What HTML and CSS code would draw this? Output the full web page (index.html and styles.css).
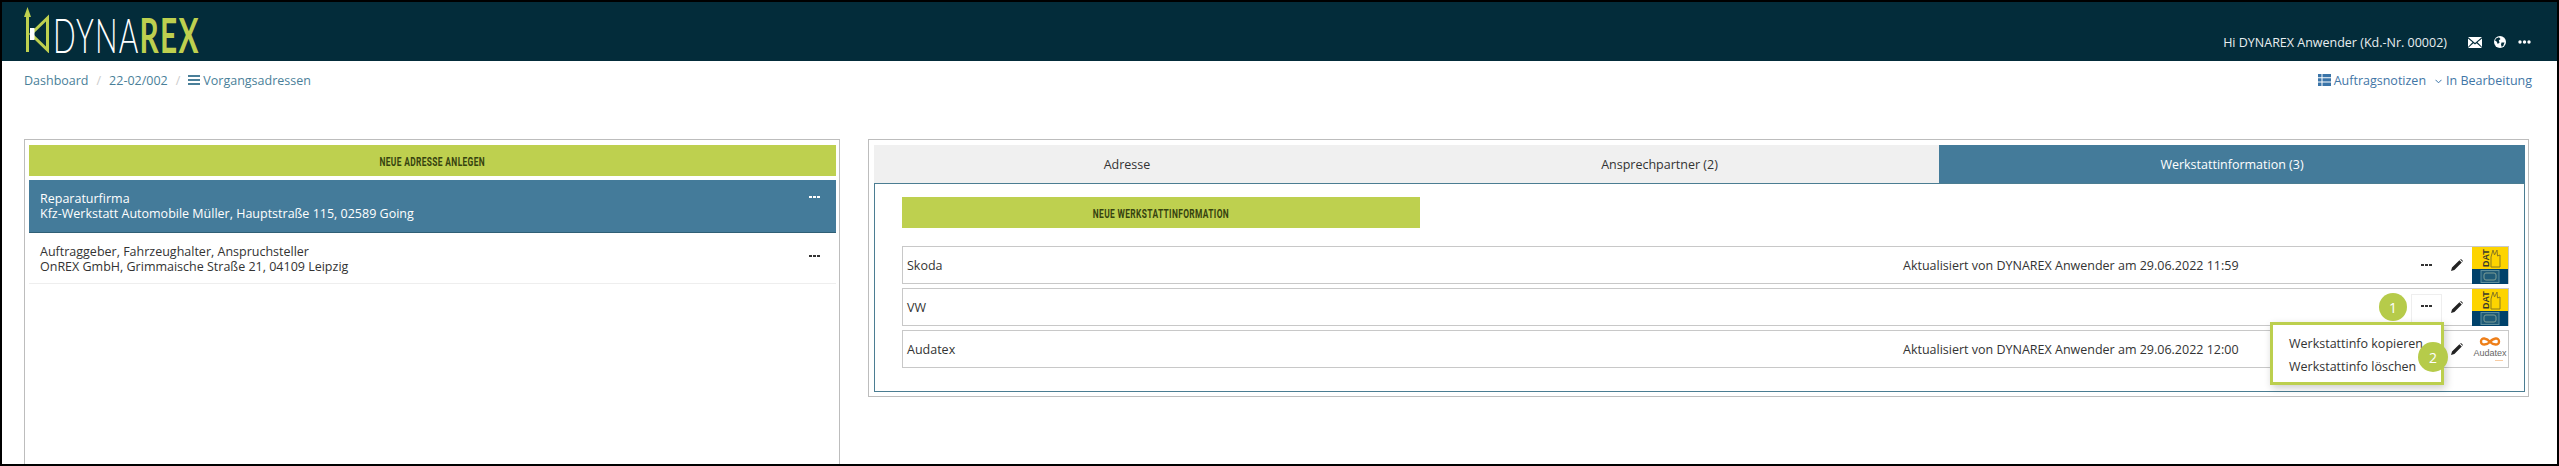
FILE: index.html
```html
<!DOCTYPE html>
<html lang="de">
<head>
<meta charset="utf-8">
<title>Vorgangsadressen</title>
<link rel="stylesheet" href="styles.css">
</head>
<body>
<div class="frame">
  <header class="topbar">
    <a class="logo">
      <svg class="logo-mark" viewBox="0 0 26 46" width="26" height="46">
        <path d="M3.5 45V8" stroke="#bed04f" stroke-width="3" fill="none"/>
        <path d="M0 10L3.5 0L7 10Z" fill="#bed04f"/>
        <path d="M23.5 11V43L7 27Z" fill="none" stroke="#bed04f" stroke-width="3"/>
        <rect x="6" y="21" width="4.5" height="12" fill="#fff"/>
      </svg>
      <span class="logo-word">DYNA<b>REX</b></span>
    </a>
    <div class="top-right">
      <span class="hi">Hi DYNAREX Anwender (Kd.-Nr. 00002)</span>
      <svg class="ic-mail" viewBox="0 0 14 11" width="14" height="11"><path d="M0 0H14L7 6Z M0 1.5V10L4.5 5.2Z M14 1.5V10L9.5 5.2Z M0 11L5.4 6.3L7 7.6L8.6 6.3L14 11Z" fill="#fff"/></svg>
      <svg class="ic-globe" viewBox="0 0 12 12" width="12" height="12"><circle cx="6" cy="6" r="6" fill="#fff"/><path d="M2 2.5L5 1.2L6.5 3L4.8 4.5L5.6 6.5L3.8 8L2.6 5.5L1 4.6Z M7.5 6.5H10.5L9.2 10L7.6 10.8L7 8.4Z" fill="#032c3a"/></svg>
      <svg class="ic-dots-top" viewBox="0 0 13 4" width="13" height="4"><circle cx="2" cy="2" r="1.7" fill="#fff"/><circle cx="6.5" cy="2" r="1.7" fill="#fff"/><circle cx="11" cy="2" r="1.7" fill="#fff"/></svg>
    </div>
  </header>

  <nav class="crumbs">
    <div class="crumb-left">
      <a>Dashboard</a><span class="sep">/</span><a>22-02/002</a><span class="sep">/</span>
      <svg class="ic-bars" viewBox="0 0 12 10" width="12" height="10"><path d="M0 0H12V2H0Z M0 4H12V6H0Z M0 8H12V10H0Z" fill="#4a7f99"/></svg><a>Vorgangsadressen</a>
    </div>
    <div class="crumb-right">
      <svg class="ic-thlist" viewBox="0 0 13 12" width="13" height="12"><path d="M0 0H3.5V3.3H0Z M4.5 0H13V3.3H4.5Z M0 4.3H3.5V7.6H0Z M4.5 4.3H13V7.6H4.5Z M0 8.6H3.5V12H0Z M4.5 8.6H13V12H4.5Z" fill="#3a74a8"/></svg>
      <a>Auftragsnotizen</a>
      <svg class="ic-chev" viewBox="0 0 7 5" width="7" height="5"><path d="M.5 .8L3.5 3.8L6.5 .8" fill="none" stroke="#3a74a8"/></svg>
      <a>In Bearbeitung</a>
    </div>
  </nav>

  <main class="content">
    <section class="panel-left">
      <button class="btn btn-wide"><span>NEUE ADRESSE ANLEGEN</span></button>
      <div class="addr addr-active">
        <p>Reparaturfirma<br>Kfz-Werkstatt Automobile Müller, Hauptstraße 115, 02589 Going</p>
        <svg class="dots" viewBox="0 0 11 2" width="11" height="2"><path d="M0 0H3V2H0Z M4 0H7V2H4Z M8 0H11V2H8Z" fill="#fff"/></svg>
      </div>
      <div class="addr">
        <p>Auftraggeber, Fahrzeughalter, Anspruchsteller<br>OnREX GmbH, Grimmaische Straße 21, 04109 Leipzig</p>
        <svg class="dots" viewBox="0 0 11 2" width="11" height="2"><path d="M0 0H3V2H0Z M4 0H7V2H4Z M8 0H11V2H8Z" fill="#333"/></svg>
      </div>
    </section>

    <section class="panel-right">
      <div class="tabs">
        <div class="tab tab-a">Adresse</div>
        <div class="tab tab-b">Ansprechpartner (2)</div>
        <div class="tab tab-c">Werkstattinformation (3)</div>
      </div>
      <div class="tab-body">
        <button class="btn btn-info"><span>NEUE WERKSTATTINFORMATION</span></button>
        <div class="rows">
          <div class="row">
            <span class="name">Skoda</span>
            <span class="updated">Aktualisiert von DYNAREX Anwender am 29.06.2022 11:59</span>
            <span class="dots-box"><svg viewBox="0 0 11 2" width="11" height="2"><path d="M0 0H3V2H0Z M4 0H7V2H4Z M8 0H11V2H8Z" fill="#333"/></svg></span>
            <span class="pencil"><svg viewBox="0 0 12 12" width="12" height="12"><path d="M0 12L1 8.6L8.4 1.2L10.8 3.6L3.4 11Z M9.2 .5L10 0L12 2L11.5 2.8Z" fill="#222"/></svg></span>
            <svg class="logo-dat" viewBox="0 0 36 37" width="36" height="37"><rect width="36" height="22" fill="#fdd400"/><rect y="22" width="36" height="15" fill="#00416a"/><text class="dat-txt" transform="translate(17 20) rotate(-90)">DAT</text><path d="M19 20V10L21 3L22.5 8L25 3L25.5 9L28 8V20Z" fill="none" stroke="#8a7a20"/><rect x="9" y="23.5" width="18" height="12" fill="#1f5a76" stroke="#5f8f9d"/><rect x="12" y="26" width="12" height="7" rx="2" fill="none" stroke="#7c9c94"/></svg>
          </div>
          <div class="row">
            <span class="name">VW</span>
            <span class="dots-box dots-open"><svg viewBox="0 0 11 2" width="11" height="2"><path d="M0 0H3V2H0Z M4 0H7V2H4Z M8 0H11V2H8Z" fill="#333"/></svg></span>
            <span class="pencil"><svg viewBox="0 0 12 12" width="12" height="12"><path d="M0 12L1 8.6L8.4 1.2L10.8 3.6L3.4 11Z M9.2 .5L10 0L12 2L11.5 2.8Z" fill="#222"/></svg></span>
            <svg class="logo-dat" viewBox="0 0 36 37" width="36" height="37"><rect width="36" height="22" fill="#fdd400"/><rect y="22" width="36" height="15" fill="#00416a"/><text class="dat-txt" transform="translate(17 20) rotate(-90)">DAT</text><path d="M19 20V10L21 3L22.5 8L25 3L25.5 9L28 8V20Z" fill="none" stroke="#8a7a20"/><rect x="9" y="23.5" width="18" height="12" fill="#1f5a76" stroke="#5f8f9d"/><rect x="12" y="26" width="12" height="7" rx="2" fill="none" stroke="#7c9c94"/></svg>
            <span class="badge badge-one">1</span>
            <div class="menu">
              <div>Werkstattinfo kopieren</div>
              <div>Werkstattinfo löschen</div>
            </div>
            <span class="badge badge-two">2</span>
          </div>
          <div class="row">
            <span class="name">Audatex</span>
            <span class="updated">Aktualisiert von DYNAREX Anwender am 29.06.2022 12:00</span>
            <span class="dots-box"></span>
            <span class="pencil"><svg viewBox="0 0 12 12" width="12" height="12"><path d="M0 12L1 8.6L8.4 1.2L10.8 3.6L3.4 11Z M9.2 .5L10 0L12 2L11.5 2.8Z" fill="#222"/></svg></span>
            <svg class="logo-audatex" viewBox="0 0 36 36" width="36" height="36"><path d="M18 11C15 7 9 6 9 10.500C9 15 15 14 18 11C21 7 27 6 27 10.500C27 15 21 14 18 11Z" fill="none" stroke="#ee7f1a" stroke-width="2.4"/><text class="aud-txt" x="18" y="25">Audatex</text><rect x="23" y="29" width="8" height="1" fill="#ee7f1a" opacity=".4"/></svg>
          </div>
        </div>
      </div>
    </section>
  </main>
</div>
</body>
</html>
```
FILE: styles.css
```css
* { box-sizing: border-box; }
html, body { margin: 0; padding: 0; background: #000; }
body { width: 2559px; height: 466px; overflow: hidden; font-family: "Open Sans", "Liberation Sans", sans-serif; font-size: 12.5px; color: #333; }
.frame { width: 2559px; height: 466px; border: 2px solid #000; background: #fff; display: flex; flex-direction: column; overflow: hidden; }

.topbar { height: 59px; flex: none; background: #032c3a; display: flex; justify-content: space-between; padding: 0 26px 0 22px; }
.logo { display: flex; align-items: flex-start; padding-top: 5px; }
.logo-mark { flex: none; margin-right: 3px; }
.logo-word { display: block; margin-top: 1px; font-family: Lato, sans-serif; font-weight: 300; font-size: 47px; line-height: 54px; color: #fff; letter-spacing: 2px; transform: scaleX(.635); transform-origin: left center; white-space: nowrap; }
.logo-word b { font-weight: 700; color: #bed04f; }
.top-right { display: flex; align-items: center; padding-top: 21px; color: #e8eef0; }
.ic-mail { margin-left: 21px; }
.ic-globe { margin-left: 12px; }
.ic-dots-top { margin-left: 12px; }

.crumbs { height: 38px; flex: none; display: flex; justify-content: space-between; align-items: center; padding: 0 25px 0 22px; color: #4a7f99; }
.crumb-left, .crumb-right { display: flex; align-items: center; }
.sep { color: #ccc; margin: 0 8px; }
.ic-bars { margin-right: 3px; }
.crumb-right { color: #3f76a6; }
.ic-thlist { margin-right: 3px; }
.ic-chev { margin: 2px 4px 0 9px; }

.content { flex: 1; display: flex; align-items: flex-start; padding: 40px 0 0 22px; gap: 28px; min-height: 0; }
.panel-left { width: 816px; height: 325px; flex: none; border: 1px solid #bdbdbd; border-bottom: 0; padding: 5px 3px 0 4px; }
.btn { display: flex; align-items: center; justify-content: center; border: 0; padding: 0; background: #bed04f; height: 31px; color: #36430f; font-family: Roboto, sans-serif; font-weight: 700; font-size: 13.5px; letter-spacing: .6px; }
.btn span { display: block; transform: scaleX(.62); white-space: nowrap; }
.btn-wide { width: 100%; }
.addr { display: flex; justify-content: space-between; padding: 11px 16px 0 11px; height: 51px; border-bottom: 1px solid #eee; }
.addr p { margin: 0; line-height: 15px; }
.addr .dots { margin-top: 11px; flex: none; }
.addr-active { margin-top: 4px; height: 53px; background: #447b9a; color: #fff; border-bottom: 1px solid #2f5f75; }
.addr-active .dots { margin-top: 5px; }

.panel-right { width: 1661px; height: 258px; flex: none; border: 1px solid #bdbdbd; padding: 5px 3px 4px 5px; }
.tabs { display: flex; height: 38px; background: #f0f0f0; }
.tab { display: flex; align-items: center; justify-content: center; }
.tab-a { width: 506px; }
.tab-b { width: 559px; }
.tab-c { flex: 1; background: #447b9a; color: #fff; }
.tab-body { height: 209px; border: 1px solid #4b7d92; padding: 13px 15px 0 27px; }
.btn-info { width: 518px; }
.rows { display: flex; flex-direction: column; gap: 4px; margin-top: 18px; }
.row { position: relative; display: flex; align-items: center; height: 38px; border: 1px solid #c8c8c8; padding-left: 4px; }
.name { flex: 1; }
.updated { width: 509px; white-space: nowrap; }
.dots-box { width: 29px; height: 27px; display: flex; align-items: center; justify-content: center; flex: none; }
.dots-box svg { display: block; }
.dots-open { align-self: flex-start; margin-top: 6px; padding-top: 10px; align-items: flex-start; background: #fff; box-shadow: 0 0 0 1px #eee; }
.pencil { width: 31px; display: flex; justify-content: center; flex: none; }
.logo-dat, .logo-audatex { flex: none; display: block; }
.dat-txt { font-family: "Liberation Sans", sans-serif; font-weight: 700; font-size: 9px; fill: #3a3a2a; }
.aud-txt { font-family: "Liberation Sans", sans-serif; font-size: 9px; text-anchor: middle; fill: #666; }

.badge { position: absolute; display: flex; align-items: center; justify-content: center; width: 28px; height: 28px; border-radius: 50%; background: #b6cb4a; color: #fff; font-size: 14px; z-index: 3; }
.badge-one { right: 101px; top: 4px; }
.badge-two { right: 60px; top: 53px; width: 30px; height: 30px; }
.menu { position: absolute; right: 64px; top: 33px; width: 174px; height: 63px; background: #fff; border: 3px solid #bccf4e; box-shadow: 2px 3px 8px rgba(0,0,0,.2); padding: 7px 0 0 16px; line-height: 23px; z-index: 2; white-space: nowrap; }
```
